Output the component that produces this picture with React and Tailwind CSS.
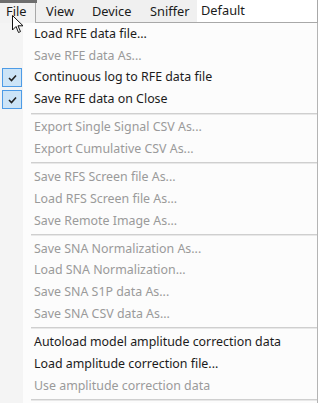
import React from 'react';

const items = [
  { label: 'Load RFE data file...' },
  { label: 'Save RFE data As...', disabled: true },
  { label: 'Continuous log to RFE data file', checked: true },
  { label: 'Save RFE data on Close', checked: true },
  { sep: true },
  { label: 'Export Single Signal CSV As...', disabled: true },
  { label: 'Export Cumulative CSV As...', disabled: true },
  { sep: true },
  { label: 'Save RFS Screen file As...', disabled: true },
  { label: 'Load RFS Screen file As...', disabled: true },
  { label: 'Save Remote Image As...', disabled: true },
  { sep: true },
  { label: 'Save SNA Normalization As...', disabled: true },
  { label: 'Load SNA Normalization...', disabled: true },
  { label: 'Save SNA S1P data As...', disabled: true },
  { label: 'Save SNA CSV data As...', disabled: true },
  { sep: true },
  { label: 'Autoload model amplitude correction data' },
  { label: 'Load amplitude correction file...' },
  { label: 'Use amplitude correction data', disabled: true },
  { sep: true },
];

function Check() {
  return (
    <div className="ml-[2px] w-[20px] h-[19px] bg-[#cce4f7] border border-[#4d9be6] flex items-center justify-center">
      <svg width="9" height="8" viewBox="0 0 9 8">
        <path d="M1 4 L3.5 6.5 L8 1.5" fill="none" stroke="#222" strokeWidth="1.6" />
      </svg>
    </div>
  );
}

function Cursor() {
  return (
    <svg className="absolute left-[12px] top-[15px]" width="12" height="19" viewBox="0 0 12 19">
      <path d="M0.5 0.5 L0.5 15 L4 11.5 L6.5 17.5 L8.5 16.6 L6 10.8 L11 10.8 Z" fill="#fff" stroke="#111" strokeWidth="1" strokeLinejoin="round" />
    </svg>
  );
}

export default function App() {
  return (
    <div className="relative w-[320px] h-[403px] overflow-hidden bg-white text-[12.4px] text-[#1b1b1b] font-['Noto_Sans',sans-serif]">
      {/* menu bar */}
      <div className="flex h-[23px] text-[12.8px]">
        <div className="relative w-[36px] bg-[#f2f2f2] border-r border-[#a8a8a8] pl-[6px] pt-[2px] leading-[19px]">
          <div className="absolute left-0 top-0 w-[37px] h-[3px] bg-[#6e6e6e]" />
          File
        </div>
        <div className="flex w-[161px] bg-[#f0f0f0] border-b border-[#a8a8a8] pt-[2px] leading-[19px]">
          <span className="w-[46px] pl-[10px]">View</span>
          <span className="w-[58px] pl-[10px]">Device</span>
          <span className="w-[57px] pl-[10px]">Sniffer</span>
        </div>
        <div className="flex-1 bg-white border-b border-[#a8a8a8] pl-[4px] pt-[1px] leading-[19px] mr-[2px] border-r">
          Default
        </div>
      </div>

      {/* dropdown */}
      <div className="flex h-[380px] mr-[2px] border-r border-[#b4b4b4]">
        <div className="w-[23px] bg-[#f4f4f4] flex flex-col">
          {items.map((it, i) =>
            it.sep ? (
              <div key={i} className="h-[6px]" />
            ) : (
              <div key={i} className="h-[22px] flex items-center">
                {it.checked && <Check />}
              </div>
            )
          )}
        </div>
        <div className="flex-1 bg-[#fcfcfc] flex flex-col">
          {items.map((it, i) =>
            it.sep ? (
              <div key={i} className="h-[6px] flex items-center pl-[8px]">
                <div className="w-full h-[2px] border-t border-[#cfcfcf] border-b-[#e8e8e8] border-b" />
              </div>
            ) : (
              <div
                key={i}
                className={`h-[22px] flex items-center pl-[11px] whitespace-nowrap ${it.disabled ? 'text-[#9a9a9a]' : 'text-[#1b1b1b]'}`}
              >
                {it.label}
              </div>
            )
          )}
        </div>
      </div>

      <Cursor />
    </div>
  );
}
